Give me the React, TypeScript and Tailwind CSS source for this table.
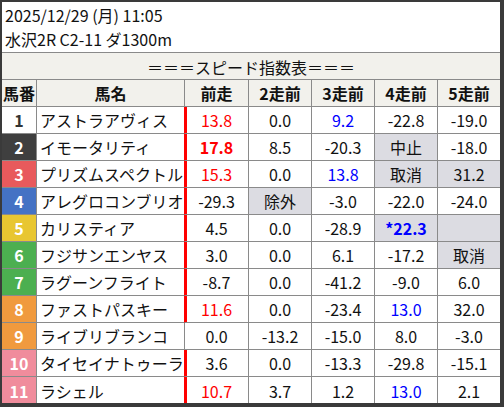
import React from 'react';

type Cell = { v: string; c?: 'red' | 'blue'; b?: boolean; gray?: boolean };

interface Row {
  no: number;
  name: string;
  bg: string;
  fg: string;
  redLine: boolean;
  cells: Cell[];
}

const n = (v: string, c?: 'red' | 'blue', b?: boolean): Cell => ({ v, c, b });
const g = (v: string, c?: 'red' | 'blue', b?: boolean): Cell => ({ v, c, b, gray: true });

const rows: Row[] = [
  { no: 1, name: 'アストラアヴィス', bg: 'bg-white', fg: 'text-[#333]', redLine: true, cells: [n('13.8', 'red'), n('0.0'), n('9.2', 'blue'), n('-22.8'), n('-19.0')] },
  { no: 2, name: 'イモータリティ', bg: 'bg-[#3f3f3f]', fg: 'text-white', redLine: true, cells: [n('17.8', 'red', true), n('8.5'), n('-20.3'), g('中止'), n('-18.0')] },
  { no: 3, name: 'プリズムスペクトル', bg: 'bg-[#e85a5c]', fg: 'text-white', redLine: true, cells: [n('15.3', 'red'), n('0.0'), n('13.8', 'blue'), g('取消'), g('31.2')] },
  { no: 4, name: 'アレグロコンブリオ', bg: 'bg-[#4472c4]', fg: 'text-white', redLine: true, cells: [n('-29.3'), g('除外'), n('-3.0'), n('-22.0'), n('-24.0')] },
  { no: 5, name: 'カリスティア', bg: 'bg-[#e8c631]', fg: 'text-white', redLine: true, cells: [n('4.5'), n('0.0'), n('-28.9'), g('*22.3', 'blue', true), g('')] },
  { no: 6, name: 'フジサンエンヤス', bg: 'bg-[#4caf50]', fg: 'text-white', redLine: true, cells: [n('3.0'), n('0.0'), n('6.1'), n('-17.2'), g('取消')] },
  { no: 7, name: 'ラグーンフライト', bg: 'bg-[#4caf50]', fg: 'text-white', redLine: true, cells: [n('-8.7'), n('0.0'), n('-41.2'), n('-9.0'), n('6.0')] },
  { no: 8, name: 'ファストパスキー', bg: 'bg-[#f09a3e]', fg: 'text-white', redLine: true, cells: [n('11.6', 'red'), n('0.0'), n('-23.4'), n('13.0', 'blue'), n('32.0')] },
  { no: 9, name: 'ライブリブランコ', bg: 'bg-[#f09a3e]', fg: 'text-white', redLine: false, cells: [n('0.0'), n('-13.2'), n('-15.0'), n('8.0'), n('-3.0')] },
  { no: 10, name: 'タイセイナトゥーラ', bg: 'bg-[#f08c9c]', fg: 'text-white', redLine: true, cells: [n('3.6'), n('0.0'), n('-13.3'), n('-29.8'), n('-15.1')] },
  { no: 11, name: 'ラシェル', bg: 'bg-[#f08c9c]', fg: 'text-white', redLine: true, cells: [n('10.7', 'red'), n('3.7'), n('1.2'), n('13.0', 'blue'), n('2.1')] },
];

const heads = ['前走', '2走前', '3走前', '4走前', '5走前'];
const grid = 'grid grid-cols-[35px_148px_64px_63px_63px_63px_62px]';

function valueClass(c: Cell) {
  const color = c.c === 'red' ? 'text-[#ff0000]' : c.c === 'blue' ? 'text-[#0000ff]' : 'text-[#111]';
  return `${color} ${c.b ? 'font-bold' : ''} ${c.gray ? 'bg-[#dcdce2]' : 'bg-white'}`;
}

export default function App() {
  return (
    <div
      className="w-[504px] h-[407px] border-l-2 border-t-2 border-r-4 border-b-4 border-[#3a3a3a] bg-white text-[16px] text-[#111] leading-none overflow-hidden"
      style={{ fontFamily: '"Noto Sans CJK JP", "Noto Sans", sans-serif' }}
    >
      <div className="h-[51px] border-b border-[#8a8a8a] flex flex-col justify-center gap-[8px] pl-[3px]">
        <div>2025/12/29 (月) 11:05</div>
        <div>水沢2R C2-11 ダ1300m</div>
      </div>
      <div className="h-[27px] border-b border-[#8a8a8a] bg-[#f2f1ec] flex items-center justify-center pt-[2px]">
        ＝＝＝スピード指数表＝＝＝
      </div>
      <div className={`${grid} h-[27px] bg-[#f2f1ec] font-bold`}>
        <div className="border-r border-b border-[#8a8a8a] flex items-center justify-center">馬番</div>
        <div className="border-r border-b border-[#8a8a8a] flex items-center justify-center">馬名</div>
        {heads.map((h, i) => (
          <div
            key={h}
            className={`${i < 4 ? 'border-r' : ''} border-b border-[#8a8a8a] flex items-center justify-center`}
          >
            {h}
          </div>
        ))}
      </div>
      {rows.map((r, ri) => (
        <div key={r.no} className={`${grid} h-[27px]`}>
          <div
            className={`${r.bg} ${r.fg} font-bold border-r ${ri < 10 ? 'border-b' : ''} border-[#8a8a8a] flex items-center justify-center`}
          >
            {r.no}
          </div>
          <div
            className={`border-r ${r.redLine ? 'border-r-[#ff0000]' : ''} ${ri < 10 ? 'border-b' : ''} border-[#8a8a8a] flex items-center pl-[3px] whitespace-nowrap overflow-hidden`}
          >
            {r.name}
          </div>
          {r.cells.map((c, i) => (
            <div
              key={i}
              className={`${valueClass(c)} ${i < 4 ? 'border-r' : ''} ${ri < 10 ? 'border-b' : ''} border-[#8a8a8a] flex items-center justify-center ${
                i === 0 && r.redLine ? 'shadow-[inset_2px_0_0_#ff0000]' : ''
              }`}
            >
              {c.v}
            </div>
          ))}
        </div>
      ))}
    </div>
  );
}
